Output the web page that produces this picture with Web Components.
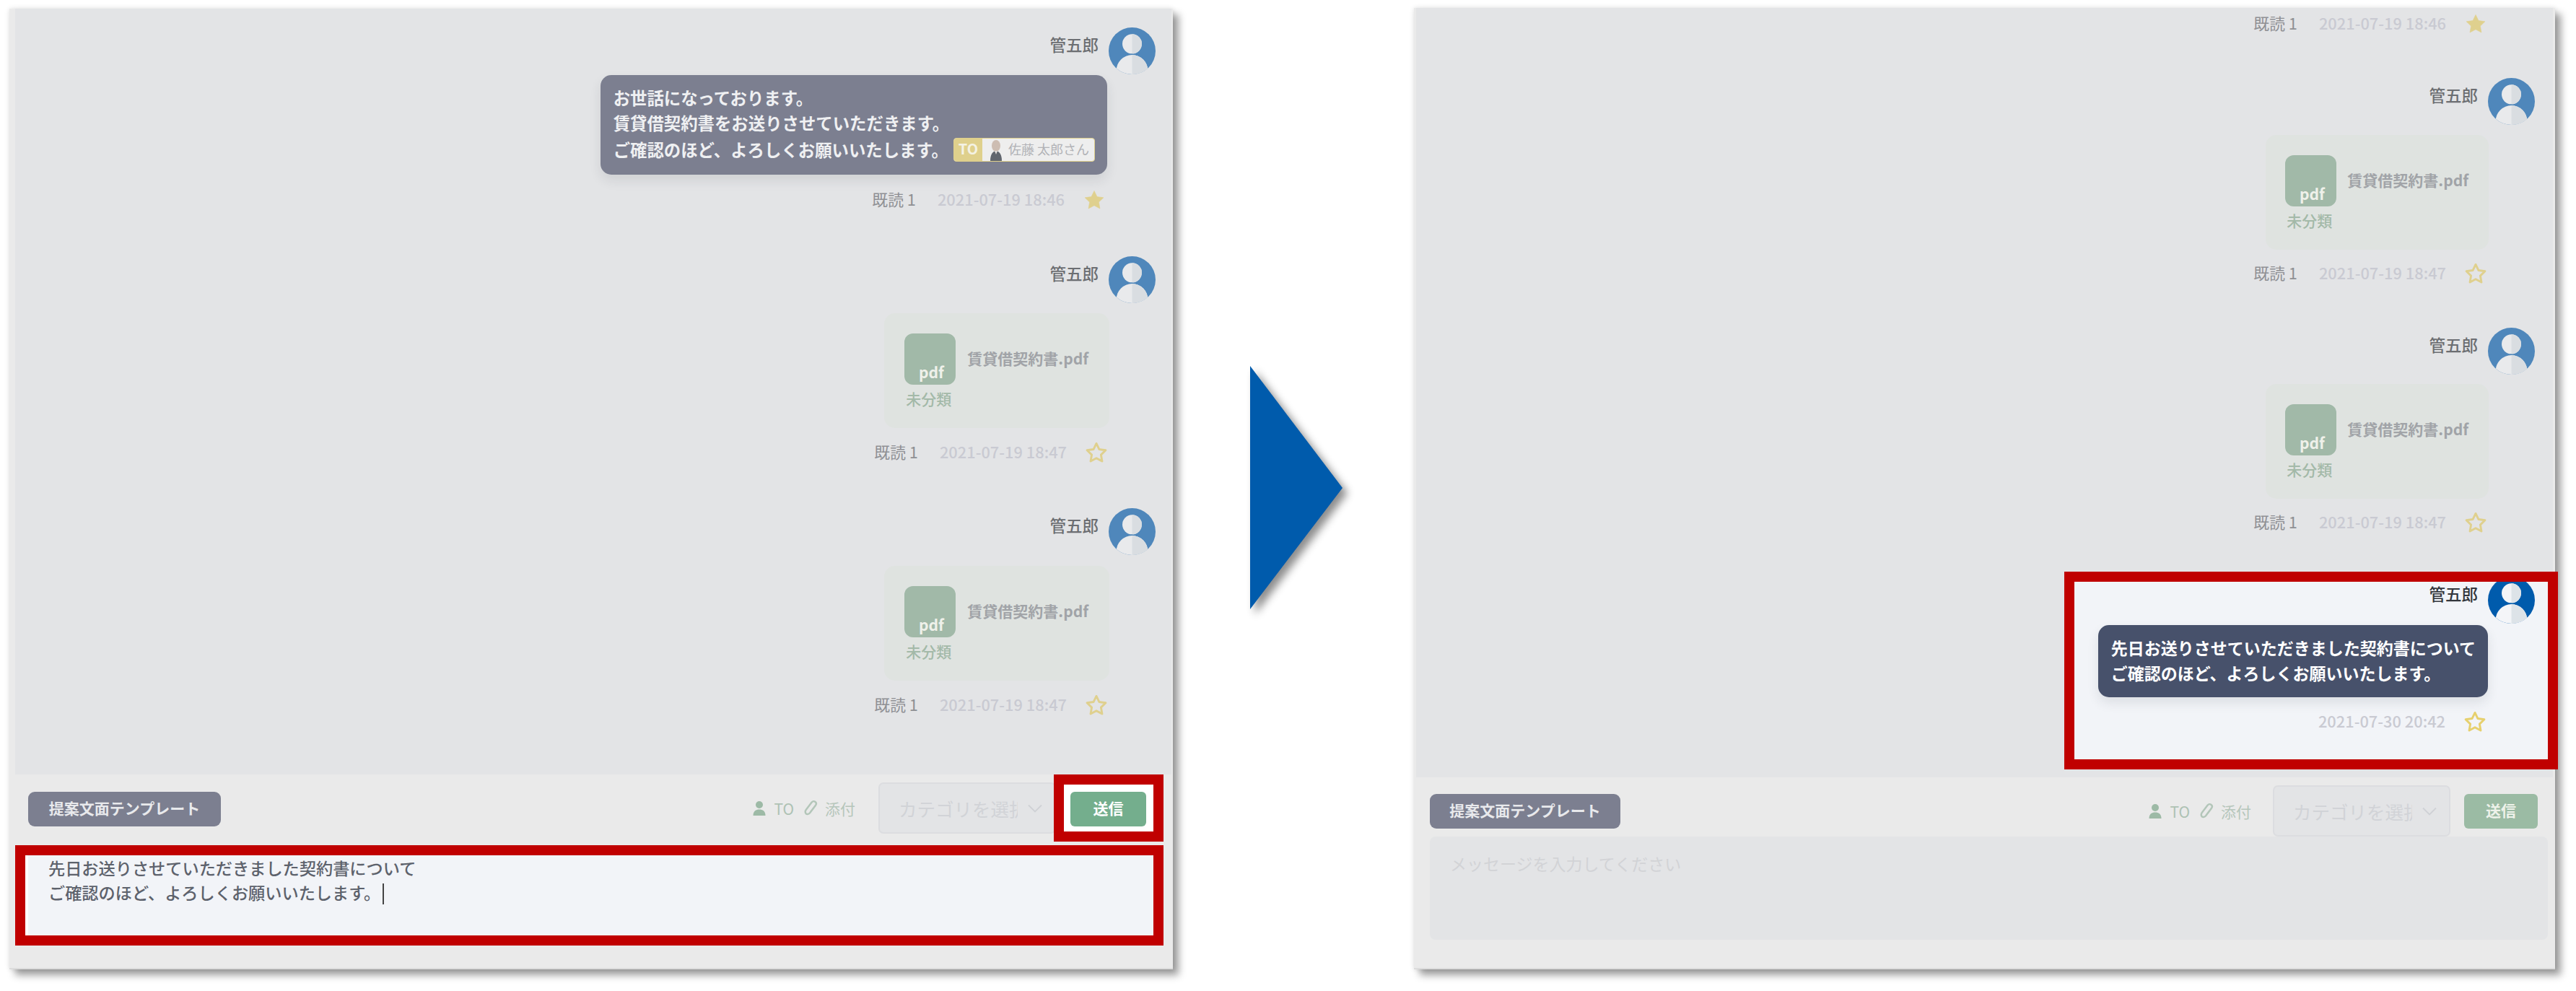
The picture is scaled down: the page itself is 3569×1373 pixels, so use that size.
<!DOCTYPE html>
<html lang="ja">
<head>
<meta charset="utf-8">
<title>メッセージ送信</title>
<style>
  html, body { margin: 0; background: #fff; }
  body {
    width: 3569px; height: 1373px; overflow: hidden;
    font-family: "Noto Sans CJK JP", "Noto Sans", sans-serif;
  }
  .slide { display: flex; align-items: flex-start; padding: 12px 0 0 13px; }
  .lines { display: block; }
  .lines > div { height: 35px; line-height: 35px; white-space: nowrap; display: flex; align-items: center; }
  .lines > div.tall { height: 38px; line-height: 38px; }
</style>
</head>
<body>
<div class="slide">

  <chat-panel style="--panel-w:1612px;--chat-ml:8px;--chat-mr:2px">
    <chat-message slot="chat" name="管五郎" read="既読 1" time="2021-07-19 18:46" star="filled"
      style="--top:26px;--body-gap:1px;--meta-gap:19px;--msg-pr:22px;--br:67px">
      <chat-bubble tone="muted" style="--bubble-fs:23.4px">
        <div class="lines">
          <div>お世話になっております。</div>
          <div>賃貸借契約書をお送りさせていただきます。</div>
          <div class="tall">ご確認のほど、よろしくお願いいたします。<to-tag>佐藤 太郎さん</to-tag></div>
        </div>
      </chat-bubble>
    </chat-message>
    <chat-message slot="chat" name="管五郎" read="既読 1" time="2021-07-19 18:47"
      style="--top:62px;--body-gap:14px;--meta-gap:18px;--msg-pr:22px;--br:64px">
      <file-card name="賃貸借契約書.pdf" label="未分類"></file-card>
    </chat-message>
    <chat-message slot="chat" name="管五郎" read="既読 1" time="2021-07-19 18:47"
      style="--top:61px;--body-gap:15px;--meta-gap:18px;--msg-pr:22px;--br:64px">
      <file-card name="賃貸借契約書.pdf" label="未分類"></file-card>
    </chat-message>

    <chat-toolbar slot="toolbar" style="--bar-h:93px;--bar-pb:5px;--bar-pl:26px;--bar-pr:13px;--tpl-w:267px;--tpl-mt:3px;--tools-gap:32px">
      <hi-light slot="send" style="--hl-ml:-3px;--inner-pad:10px 10px 7px 9px">
        <send-button active style="--send-w:105px"></send-button>
      </hi-light>
    </chat-toolbar>

    <hi-light slot="composer" style="--hl-ml:8px;--hl-w:1591px;--hl-h:139px;--edge:4px">
      <message-box value></message-box>
    </hi-light>
    <div slot="composer" style="height:31px"></div>
  </chat-panel>

  <slide-arrow></slide-arrow>

  <chat-panel style="--panel-w:1581px;--panel-mt:-1px;--panel-h:1332px;--chat-ml:3px;--chat-mr:3px;--card-pad:28px 28px 0 27px;--card-gap:15px">
    <chat-message slot="chat" read="既読 1" time="2021-07-19 18:46" star="filled"
      style="--top:6px;--meta-gap:0px;--msg-pr:25px;--br:64px"></chat-message>
    <chat-message slot="chat" name="管五郎" read="既読 1" time="2021-07-19 18:47"
      style="--top:59px;--body-gap:14px;--meta-gap:17px;--msg-pr:25px;--br:64px">
      <file-card name="賃貸借契約書.pdf" label="未分類"></file-card>
    </chat-message>
    <chat-message slot="chat" name="管五郎" read="既読 1" time="2021-07-19 18:47"
      style="--top:59px;--body-gap:13px;--meta-gap:17px;--msg-pr:25px;--br:64px">
      <file-card name="賃貸借契約書.pdf" label="未分類"></file-card>
    </chat-message>
    <hi-light slot="chat" style="--hl-ml:auto;--hl-mr:-7px;--hl-mt:52px;--hl-w:684px;--hl-h:274px">
      <chat-message active name="管五郎" time="2021-07-30 20:42"
        style="--top:-7px;--body-gap:2px;--meta-gap:18px;--msg-pr:18px;--br:65px">
        <chat-bubble>
          <div class="lines">
            <div>先日お送りさせていただきました契約書について</div>
            <div>ご確認のほど、よろしくお願いいたします。</div>
          </div>
        </chat-bubble>
      </chat-message>
    </hi-light>

    <chat-toolbar slot="toolbar" style="--bar-h:69px;--bar-py:11px;--bar-pb:0px;--bar-pl:22px;--bar-pr:24px;--tpl-w:264px;--tpl-mt:0px;--tools-gap:30px">
      <send-button slot="send" style="--send-w:102px;--send-ml:19px"></send-button>
    </chat-toolbar>

    <message-box slot="composer" style="--box-ml:22px;--box-mr:10px;--box-h:143px"></message-box>
    <div slot="composer" style="height:39px"></div>
  </chat-panel>

</div>

<script>
  const personSvg = (bg, left, right) => `
    <svg viewBox="0 0 64 64" width="100%" height="100%" aria-hidden="true">
      <defs>
        <clipPath id="round"><circle cx="32" cy="32" r="32"/></clipPath>
        <clipPath id="half"><rect x="32" y="0" width="32" height="64"/></clipPath>
      </defs>
      <g clip-path="url(#round)">
        <rect width="64" height="64" fill="${bg}"/>
        <circle cx="32" cy="22.5" r="13.3" fill="${left}"/>
        <circle cx="32" cy="59" r="21.5" fill="${left}"/>
        <g clip-path="url(#half)">
          <circle cx="32" cy="22.5" r="13.3" fill="${right}"/>
          <circle cx="32" cy="59" r="21.5" fill="${right}"/>
        </g>
      </g>
    </svg>`;

  class UserAvatar extends HTMLElement {
    connectedCallback() {
      const root = this.shadowRoot || this.attachShadow({ mode: 'open' });
      const active = this.hasAttribute('active');
      root.innerHTML = `
        <style>
          :host { display: block; width: 65px; height: 65px; flex: none; }
        </style>
        ${active ? personSvg('#005bac', '#f4f5f8', '#dde3e8') : personSvg('#4f87bb', '#e9eaec', '#d9dde1')}`;
    }
  }

  class StarMark extends HTMLElement {
    connectedCallback() {
      const root = this.shadowRoot || this.attachShadow({ mode: 'open' });
      const filled = this.hasAttribute('filled');
      const color = this.hasAttribute('active') ? '#e6d06e' : '#dfd08e';
      root.innerHTML = `
        <style>
          :host { display: block; width: 34px; height: 32px; flex: none; }
        </style>
        <svg viewBox="-1 -1 34 33" width="34" height="32" aria-hidden="true">
          <polygon points="16,2.5 20.1,10.9 29.3,12.2 22.6,18.7 24.2,27.9 16,23.5 7.8,27.9 9.4,18.7 2.7,12.2 11.9,10.9"
            fill="${filled ? color : 'none'}" stroke="${color}" stroke-width="${filled ? 0.6 : 3}" stroke-linejoin="round"/>
        </svg>`;
    }
  }

  class ChatMessage extends HTMLElement {
    connectedCallback() {
      const root = this.shadowRoot || this.attachShadow({ mode: 'open' });
      const name = this.getAttribute('name');
      const read = this.getAttribute('read');
      const active = this.hasAttribute('active') ? 'active' : '';
      const filled = this.getAttribute('star') === 'filled' ? 'filled' : '';
      root.innerHTML = `
        <style>
          :host {
            display: block; flex: none;
            margin-top: var(--top, 0);
            padding-right: var(--msg-pr, 22px);
          }
          .head { display: flex; justify-content: flex-end; gap: 14px; }
          .name {
            margin-top: 8px; height: 30px; line-height: 30px;
            font-size: 22.5px; font-weight: 500;
            color: ${active ? '#33363c' : '#6c6e72'};
          }
          .body {
            display: flex; justify-content: flex-end;
            margin-top: var(--body-gap, 0);
            margin-right: var(--br, 67px);
          }
          .meta {
            display: flex; justify-content: flex-end; align-items: center;
            height: 32px;
            margin-top: var(--meta-gap, 0);
            margin-right: calc(var(--br, 67px) + 1px);
            font-size: 21.8px; white-space: nowrap;
          }
          .meta span { padding-bottom: 3px; }
          .read { color: #8f9094; margin-right: 30px; }
          .time { color: #c9cad2; font-weight: 500; margin-right: 24px; }
        </style>
        ${name ? `<div class="head"><div class="name">${name}</div><user-avatar ${active}></user-avatar></div>
        <div class="body"><slot></slot></div>` : ''}
        <div class="meta">
          ${read ? `<span class="read">${read}</span>` : ''}
          <span class="time">${this.getAttribute('time')}</span>
          <star-mark ${filled} ${active}></star-mark>
        </div>`;
    }
  }

  class ChatBubble extends HTMLElement {
    connectedCallback() {
      const root = this.shadowRoot || this.attachShadow({ mode: 'open' });
      const muted = this.getAttribute('tone') === 'muted';
      root.innerHTML = `
        <style>
          :host {
            display: block; box-sizing: border-box;
            padding: 14px 17px 16px 18px;
            border-radius: 15px;
            background: ${muted ? '#7c7f90' : '#47516b'};
            color: ${muted ? '#eff0f2' : '#ffffff'};
            font-size: var(--bubble-fs, 23px); font-weight: 700;
            box-shadow: 0 8px 16px rgba(40, 45, 60, 0.1);
          }
        </style>
        <slot></slot>`;
    }
  }

  class ToTag extends HTMLElement {
    connectedCallback() {
      const root = this.shadowRoot || this.attachShadow({ mode: 'open' });
      root.innerHTML = `
        <style>
          :host {
            display: inline-flex; align-items: stretch; box-sizing: border-box;
            height: 33px; margin-left: 7px;
            border: 1.5px solid #dfd08c; border-radius: 4px;
            background: #eeeeee; overflow: hidden;
            font-weight: 400; line-height: 28px;
          }
          .to {
            width: 39px; background: #dfd08c; color: #f4f2e4;
            font-size: 20px; font-weight: 700; text-align: center;
          }
          svg { margin: 1px 0 0 8px; }
          .who { margin: 0 7px 0 6px; font-size: 18px; color: #b1b2b6; }
        </style>
        <span class="to">TO</span>
        <svg viewBox="0 0 22 30" width="22" height="30" aria-hidden="true">
          <ellipse cx="11" cy="9" rx="6" ry="8" fill="#cdbdb2"/>
          <path d="M3 30 C3 21 6 17 11 16 C16 17 19 21 19 30 Z" fill="#61666e"/>
          <path d="M9 16 L11 21 L13 16 Z" fill="#e6e2de"/>
        </svg>
        <span class="who"><slot></slot></span>`;
    }
  }

  class FileCard extends HTMLElement {
    connectedCallback() {
      const root = this.shadowRoot || this.attachShadow({ mode: 'open' });
      root.innerHTML = `
        <style>
          :host {
            display: block; box-sizing: border-box;
            height: 159px; padding: var(--card-pad, 28px 29px 0 28px);
            border-radius: 15px; background: #dfe3e0;
          }
          .row { display: flex; gap: var(--card-gap, 16px); }
          .icon {
            width: 71px; height: 71px; box-sizing: border-box;
            display: flex; align-items: flex-end; justify-content: center;
            padding: 0 0 3px 3px;
            border-radius: 12px; background: #a1b9a8;
            color: #eff1ea; font-size: 21px; font-weight: 700; line-height: 30px;
          }
          .file {
            height: 71px; line-height: 68px; white-space: nowrap;
            color: #a1a4a8; font-size: 21px; font-weight: 700;
          }
          .label {
            margin: 4px 0 0 2px; line-height: 30px;
            color: #a3b9a8; font-size: 21px; font-weight: 500;
          }
        </style>
        <div class="row">
          <div class="icon">pdf</div>
          <div class="file">${this.getAttribute('name')}</div>
        </div>
        <div class="label">${this.getAttribute('label')}</div>`;
    }
  }

  class HiLight extends HTMLElement {
    constructor() {
      super();
      this.attachShadow({ mode: 'open' }).innerHTML = `
        <style>
          :host {
            display: block; flex: none; box-sizing: border-box;
            width: var(--hl-w, auto); height: var(--hl-h, auto);
            margin-left: var(--hl-ml, 0);
            margin-right: var(--hl-mr, 0);
            margin-top: var(--hl-mt, 0);
            border: 14px solid #c00000;
            background: #ffffff;
          }
          .inner {
            box-sizing: border-box; height: 100%; overflow: hidden;
            padding: var(--inner-pad, 0);
            border-left: var(--edge, 0) solid #ffffff;
          }
          :host(:not([slot="send"])) .inner { background: #f2f4f8; }
        </style>
        <div class="inner"><slot></slot></div>`;
    }
  }

  class SendButton extends HTMLElement {
    connectedCallback() {
      const root = this.shadowRoot || this.attachShadow({ mode: 'open' });
      const active = this.hasAttribute('active');
      root.innerHTML = `
        <style>
          :host {
            display: flex; align-items: center; justify-content: center;
            box-sizing: border-box; flex: none;
            width: var(--send-w, 105px); height: 48px;
            margin-left: var(--send-ml, 0);
            padding-bottom: 4px;
            border-radius: 6px;
            background: ${active ? '#74ae8d' : '#9bbba4'};
            color: ${active ? '#ffffff' : '#eef2ea'};
            font-size: 21px; font-weight: 700;
          }
        </style>
        送信`;
    }
  }

  class ChatToolbar extends HTMLElement {
    connectedCallback() {
      const root = this.shadowRoot || this.attachShadow({ mode: 'open' });
      root.innerHTML = `
        <style>
          :host {
            display: flex; align-items: center; flex: none;
            min-height: var(--bar-h, 93px);
            padding: var(--bar-py, 0) var(--bar-pr, 13px) var(--bar-pb, 0) var(--bar-pl, 26px);
          }
          .template {
            display: flex; align-items: center; justify-content: center;
            box-sizing: border-box; flex: none; white-space: nowrap;
            width: var(--tpl-w, 267px); height: 48px;
            margin-top: var(--tpl-mt, 0);
            padding-bottom: 4px;
            border-radius: 9px;
            background: #7c7f90; color: #e8e9ec;
            font-size: 21px; font-weight: 700;
          }
          .tools {
            display: flex; align-items: center; white-space: nowrap;
            margin-left: auto; margin-right: var(--tools-gap, 32px);
            font-size: 21px; line-height: 30px; color: #aec2b4;
          }
          .tools svg { display: block; flex: none; }
          .to { margin: 0 14px 0 11px; }
          .att { margin-left: 10px; color: #b6c6bb; }
          .select {
            display: flex; align-items: center; box-sizing: border-box;
            width: 246px; height: 71px; flex: none;
            padding-left: 26px;
            border: 2px solid #dcdde0; border-radius: 7px;
            background: #e3e4e6;
          }
          .select span {
            display: block; width: 165px; overflow: hidden; white-space: nowrap;
            color: #d1d3d7; font-size: 25.5px;
          }
          .select svg { margin-left: 14px; flex: none; }
        </style>
        <div class="template">提案文面テンプレート</div>
        <div class="tools">
          <svg viewBox="0 0 18 22" width="18" height="22" aria-hidden="true">
            <circle cx="9" cy="6" r="5" fill="#9dbaa6"/>
            <path d="M0.5 21 C0.5 14.5 4.5 12.5 9 12.5 C13.5 12.5 17.5 14.5 17.5 21 Z" fill="#9dbaa6"/>
          </svg>
          <span class="to">TO</span>
          <svg viewBox="0 0 20 24" width="19" height="23" aria-hidden="true">
            <path d="M16.5 8.5 L8.5 19 C6.5 21.5 3.6 21.2 2.6 19.8 C1.4 18.2 1.8 16 3.2 14.2 L11 3.9 C12.4 2.1 14.8 1.8 16.4 3 C18 4.3 18 6.4 16.8 8 L9.2 18"
              fill="none" stroke="#b3c6b9" stroke-width="2.6" stroke-linecap="round"/>
          </svg>
          <span class="att">添付</span>
        </div>
        <div class="select">
          <span>カテゴリを選択</span>
          <svg viewBox="0 0 20 12" width="20" height="12" aria-hidden="true">
            <path d="M1 1.5 L10 10.5 L19 1.5" fill="none" stroke="#cfd1d5" stroke-width="1.8"/>
          </svg>
        </div>
        <slot name="send"></slot>`;
    }
  }

  class MessageBox extends HTMLElement {
    connectedCallback() {
      const root = this.shadowRoot || this.attachShadow({ mode: 'open' });
      const hasValue = this.hasAttribute('value');
      root.innerHTML = `
        <style>
          :host {
            display: block; box-sizing: border-box; flex: none;
            margin-left: var(--box-ml, 0); margin-right: var(--box-mr, 0);
            height: var(--box-h, auto);
            font-size: ${hasValue ? '23.2px' : '23px'}; line-height: 34px;
            padding: ${hasValue ? '0 0 0 28px' : '20px 0 0 28px'};
            ${hasValue ? '' : 'background: #e3e4e6; border-radius: 8px;'}
          }
          .typed { color: #5d626c; font-weight: 500; }
          .hint { color: #d2d3d6; }
          .caret {
            display: inline-block; width: 1.5px; height: 29px;
            margin-left: 3px; vertical-align: -7px; background: #444;
          }
        </style>
        ${hasValue
          ? `<div class="typed">先日お送りさせていただきました契約書について<br>ご確認のほど、よろしくお願いいたします。<span class="caret"></span></div>`
          : `<div class="hint">メッセージを入力してください</div>`}`;
    }
  }

  class ChatPanel extends HTMLElement {
    constructor() {
      super();
      this.attachShadow({ mode: 'open' }).innerHTML = `
        <style>
          :host {
            display: flex; flex-direction: column; flex: none; box-sizing: border-box;
            width: var(--panel-w); height: var(--panel-h, 1331px);
            margin-top: var(--panel-mt, 0);
            background: #eaeaea;
            border-bottom: 2px solid #dcdcdc;
            box-shadow: 8px 8px 10px rgba(0, 0, 0, 0.38), 0 0 7px rgba(0, 0, 0, 0.12);
          }
          .chat {
            flex: 1; min-height: 0;
            display: flex; flex-direction: column;
            margin: 0 var(--chat-mr) 0 var(--chat-ml);
            background: #e3e4e6;
          }
          .composer { display: flex; flex-direction: column; flex: none; }
        </style>
        <div class="chat"><slot name="chat"></slot></div>
        <slot name="toolbar"></slot>
        <div class="composer"><slot name="composer"></slot></div>`;
    }
  }

  class SlideArrow extends HTMLElement {
    constructor() {
      super();
      this.attachShadow({ mode: 'open' }).innerHTML = `
        <style>
          :host { display: block; flex: none; width: 128px; height: 337px; margin: 495px 99px 0 107px; }
          svg { display: block; overflow: visible; filter: drop-shadow(7px 7px 6px rgba(0, 0, 0, 0.45)); }
        </style>
        <svg viewBox="0 0 128 337" width="128" height="337" aria-hidden="true">
          <polygon points="0,0 128,169 0,337" fill="#005bac"/>
        </svg>`;
    }
  }

  customElements.define('user-avatar', UserAvatar);
  customElements.define('star-mark', StarMark);
  customElements.define('chat-message', ChatMessage);
  customElements.define('chat-bubble', ChatBubble);
  customElements.define('to-tag', ToTag);
  customElements.define('file-card', FileCard);
  customElements.define('hi-light', HiLight);
  customElements.define('send-button', SendButton);
  customElements.define('chat-toolbar', ChatToolbar);
  customElements.define('message-box', MessageBox);
  customElements.define('chat-panel', ChatPanel);
  customElements.define('slide-arrow', SlideArrow);
</script>
</body>
</html>
